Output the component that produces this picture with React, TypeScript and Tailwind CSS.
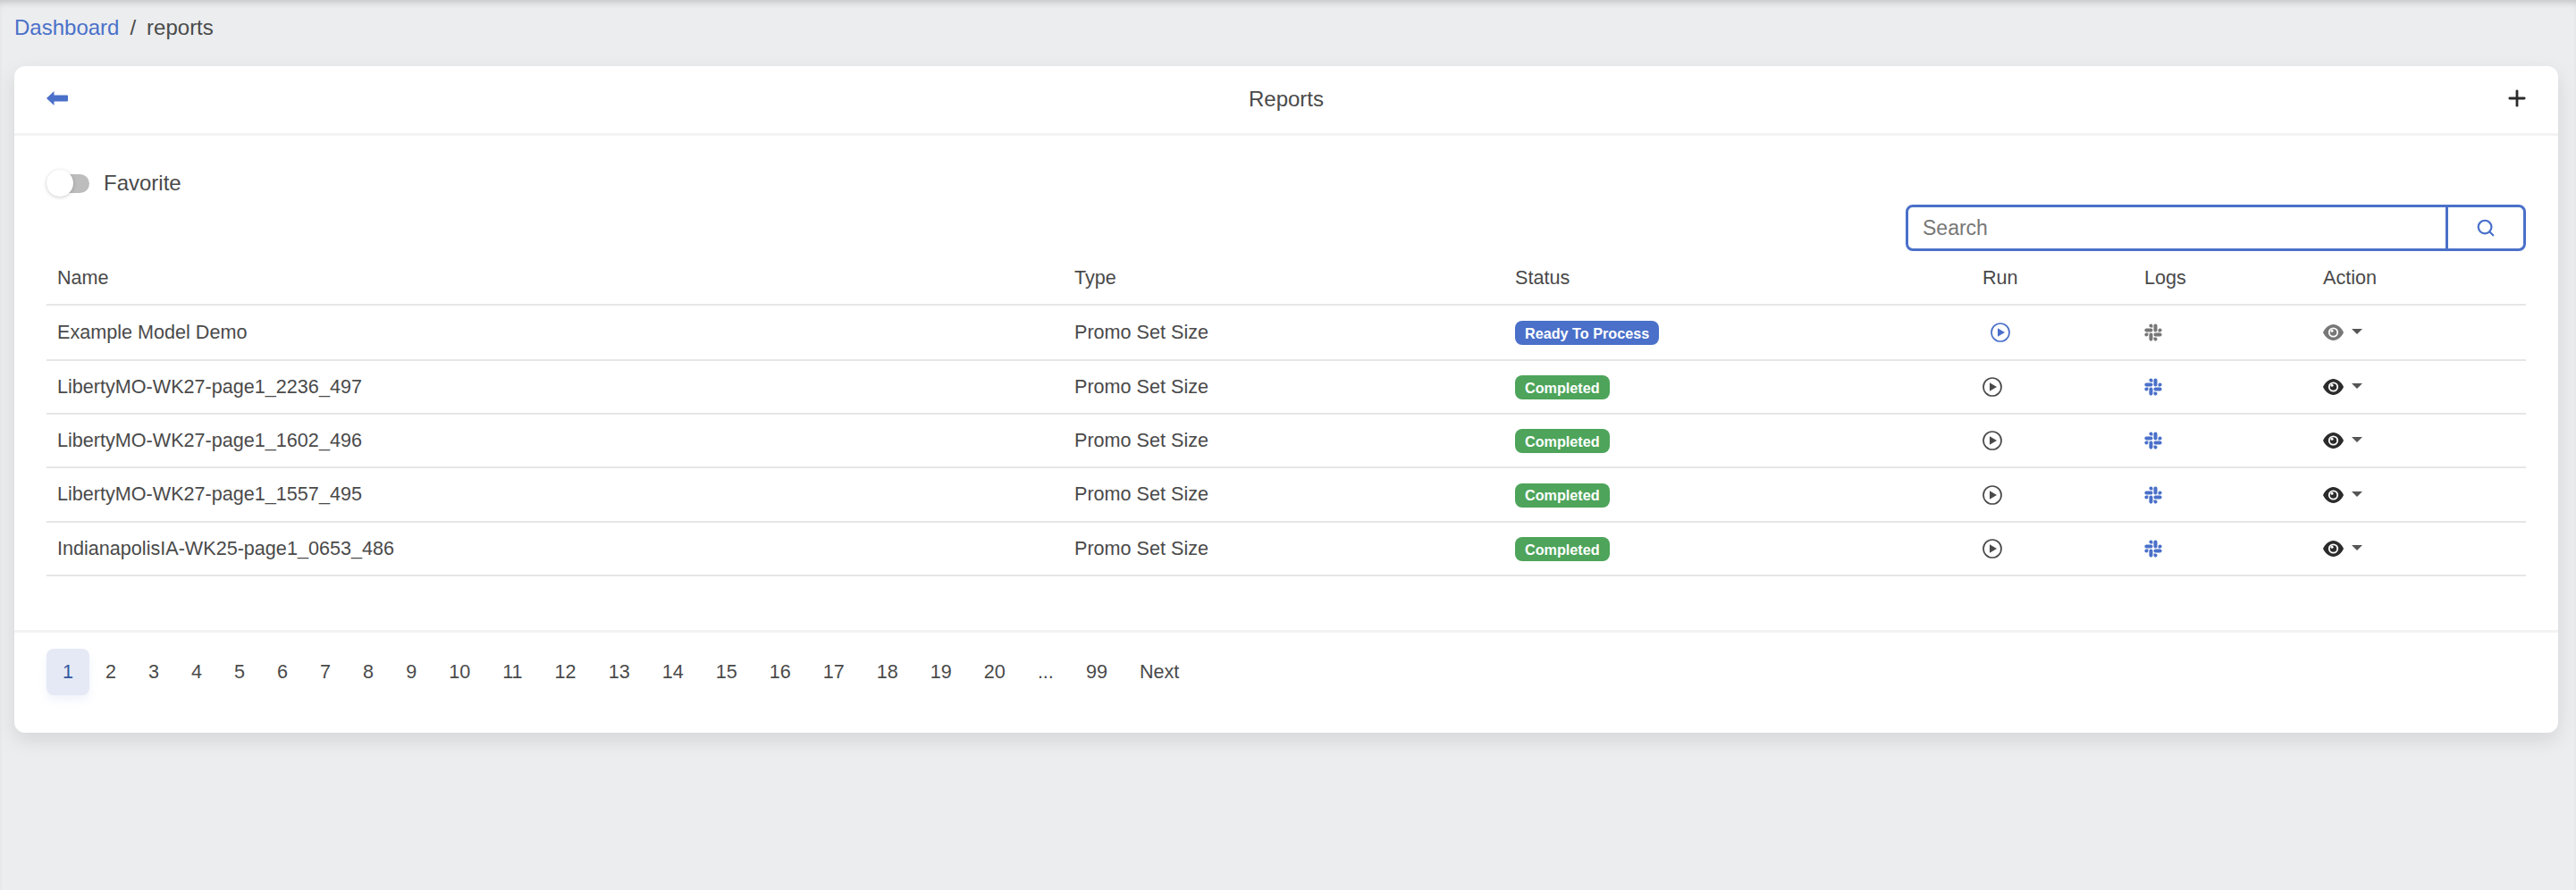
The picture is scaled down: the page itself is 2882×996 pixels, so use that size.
import { FaSlack } from 'react-icons/fa';
import { Plus, Search } from 'lucide-react';

interface Report {
  name: string;
  status: string;
  ready: boolean;
  height: string;
}

const reports: Report[] = [
  { name: 'Example Model Demo', status: 'Ready To Process', ready: true, height: 'h-[62px]' },
  { name: 'LibertyMO-WK27-page1_2236_497', status: 'Completed', ready: false, height: 'h-[60px]' },
  { name: 'LibertyMO-WK27-page1_1602_496', status: 'Completed', ready: false, height: 'h-[60px]' },
  { name: 'LibertyMO-WK27-page1_1557_495', status: 'Completed', ready: false, height: 'h-[61px]' },
  { name: 'IndianapolisIA-WK25-page1_0653_486', status: 'Completed', ready: false, height: 'h-[60px]' },
];

const pages = ['1', '2', '3', '4', '5', '6', '7', '8', '9', '10', '11', '12', '13', '14', '15', '16', '17', '18', '19', '20', '...', '99', 'Next'];

function BackArrow() {
  return (
    <svg viewBox="0 0 24 16" className="w-6 h-4 text-[#4a70c9]" fill="currentColor">
      <path d="M0 8 L8.5 0 V4.6 H23 Q24 4.6 24 5.6 V10.4 Q24 11.4 23 11.4 H8.5 V16 Z" />
    </svg>
  );
}

function PlayIcon({ className }: { className: string }) {
  return (
    <svg viewBox="0 0 22 22" className={`w-[22px] h-[22px] ${className}`} fill="none" stroke="currentColor">
      <circle cx="11" cy="11" r="10" strokeWidth="1.7" />
      <path d="M8 6.2 L16 11 L8 15.8 Z" fill="currentColor" stroke="none" />
    </svg>
  );
}

function EyeIcon({ className }: { className: string }) {
  return (
    <svg viewBox="0 0 23 18" className={`w-[23px] h-[18px] ${className}`} fill="currentColor">
      <path d="M0 9 C2.5 3.5 7 0 11.5 0 S20.5 3.5 23 9 C20.5 14.5 16 18 11.5 18 S2.5 14.5 0 9 Z" />
      <circle cx="11.5" cy="9" r="5.6" fill="white" />
      <circle cx="11.5" cy="9" r="3.8" />
      <circle cx="10" cy="7.2" r="1.5" fill="white" />
    </svg>
  );
}

function StatusBadge({ report }: { report: Report }) {
  return (
    <span className={`inline-flex items-center h-[27px] px-[11px] rounded-lg text-white text-[16.2px] font-bold ${report.ready ? 'bg-[#4a70c9]' : 'bg-[#4da45a]'}`}>
      {report.status}
    </span>
  );
}

function ReportRow({ report }: { report: Report }) {
  return (
    <tr className={`${report.height} border-b-2 border-[#e6e6e6]`}>
      <td className="px-3">{report.name}</td>
      <td className="px-3">Promo Set Size</td>
      <td className="px-3"><StatusBadge report={report} /></td>
      <td className="px-3">
        <PlayIcon className={report.ready ? 'ml-[9px] text-[#4a70c9]' : 'text-[#4a4a4a]'} />
      </td>
      <td className="px-3">
        <FaSlack className={`-ml-[1px] text-[22px] ${report.ready ? 'text-[#777777]' : 'text-[#4a70c9]'}`} />
      </td>
      <td className="px-3">
        <div className="flex items-center">
          <EyeIcon className={report.ready ? 'text-[#777777]' : 'text-[#2b2b2b]'} />
          <span className="ml-[9px] mb-[2px] w-0 h-0 border-x-[6px] border-x-transparent border-t-[6px] border-t-[#555555]" />
        </div>
      </td>
    </tr>
  );
}

export default function App() {
  return (
    <div className="min-h-[996px] bg-[#ecedef] shadow-[inset_0_7px_8px_-5px_rgba(0,0,0,0.2)] pl-4 pr-5 font-['Liberation_Sans',Arial,sans-serif] text-[#4a4a4a]">
      <nav className="h-[74px] pt-[17px] flex items-start gap-[12px] text-[24px] leading-[28px]">
        <a className="text-[#4a70c9]">Dashboard</a>
        <span>/</span>
        <span>reports</span>
      </nav>

      <div className="h-[746px] bg-white rounded-xl shadow-[0_8px_22px_rgba(0,0,0,0.1)] flex flex-col">
        {/* Header */}
        <div className="h-[78px] px-9 pb-[3px] flex items-center justify-between border-b-[3px] border-[#f3f3f3] relative">
          <BackArrow />
          <span className="absolute left-0 right-0 pt-[1px] text-center text-[24px]">Reports</span>
          <Plus className="w-[28px] h-[28px] text-[#2b2b2b] mr-[-4px]" strokeWidth={2.4} />
        </div>

        {/* Body */}
        <div className="px-9 flex-1">
          <div className="mt-[38px] h-[30px] flex items-center">
            <button className="relative w-[48px] h-[21px] rounded-full bg-[#bdbdbd]">
              <span className="absolute left-0 top-[-5px] w-[30px] h-[30px] rounded-full bg-white shadow-[0_1px_4px_rgba(0,0,0,0.2)]" />
            </button>
            <span className="ml-4 text-[24px]">Favorite</span>
          </div>

          <div className="mt-[9px] flex justify-end">
            <div className="w-[694px] h-[52px] flex border-[3px] border-[#4a70c9] rounded-lg">
              <input
                placeholder="Search"
                className="flex-1 min-w-0 px-4 text-[23px] outline-none placeholder:text-[#777777]"
              />
              <button className="w-[87px] border-l-[3px] border-[#4a70c9] flex items-center justify-center">
                <Search className="w-[22px] h-[22px] text-[#4a70c9]" strokeWidth={2.4} />
              </button>
            </div>
          </div>

          <table className="w-full table-fixed text-[21.6px]">
            <colgroup>
              <col className="w-[1138px]" />
              <col className="w-[493px]" />
              <col className="w-[523px]" />
              <col className="w-[181px]" />
              <col className="w-[200px]" />
              <col />
            </colgroup>
            <thead>
              <tr className="h-[60px] border-b-2 border-[#e6e6e6] text-left">
                <th className="px-3 pt-[2px] font-normal">Name</th>
                <th className="px-3 pt-[2px] font-normal">Type</th>
                <th className="px-3 pt-[2px] font-normal">Status</th>
                <th className="px-3 pt-[2px] font-normal">Run</th>
                <th className="px-3 pt-[2px] font-normal">Logs</th>
                <th className="px-3 pt-[2px] font-normal">Action</th>
              </tr>
            </thead>
            <tbody>
              {reports.map((report) => (
                <ReportRow key={report.name} report={report} />
              ))}
            </tbody>
          </table>
        </div>

        {/* Pagination */}
        <div className="h-[115px] px-9 pt-[18px] border-t-[3px] border-[#f3f3f3] flex items-start text-[21.6px]">
          {pages.map((page) => (
            <a
              key={page}
              className={page === '1'
                ? 'h-[52px] px-[18px] flex items-center rounded-lg bg-[#e4e9f5] text-[#33579f] shadow-[0_6px_10px_rgba(74,112,201,0.08)]'
                : 'h-[52px] px-[18px] flex items-center'}
            >
              {page}
            </a>
          ))}
        </div>
      </div>
    </div>
  );
}
